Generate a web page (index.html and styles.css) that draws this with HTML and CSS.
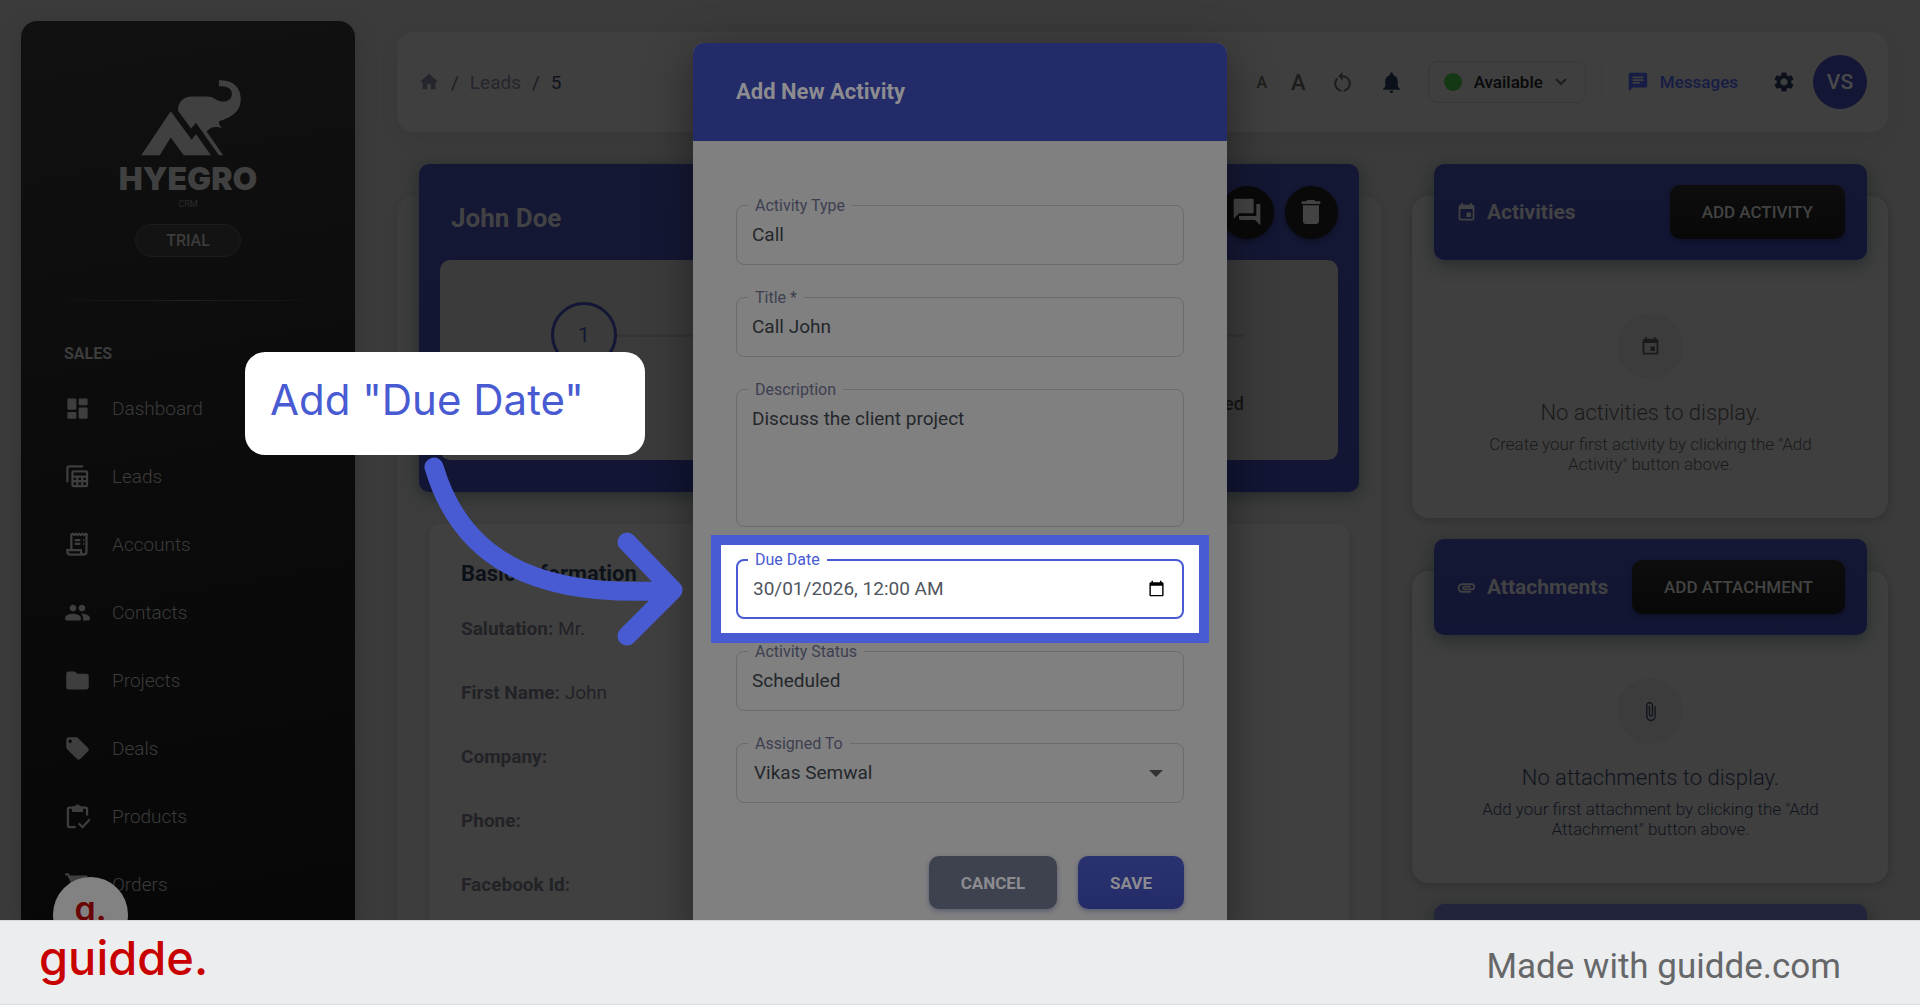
FILE: index.html
```html
<!DOCTYPE html>
<html lang="en">
  <head>
    <meta charset="UTF-8" />
    <meta name="viewport" content="width=device-width, initial-scale=1.0" />
    <title>Hyegro CRM - Add New Activity</title>
    <link rel="stylesheet" href="styles.css">
  </head>
  <body>
    <div class="stage">
      <aside class="sidebar">
        <div class="brand">
          <svg class="brand-logo" viewBox="420 235 306 232">
            <path d="M512 332L575 418L588 401L633 465H551L512 411L479 465H423Z" />
            <path d="M657 239C700 236 723 262 723 295C723 330 700 348 658 362C656 370 660 378 669 384C650 376 632 378 620 393L670 465H657L588 367L573 384L534 331C533 305 550 288 575 288H620C645 288 648 303 668 303C685 303 696 295 696 280C696 262 680 256 657 257Z" />
          </svg>
          <div class="brand-name">HYEGRO</div>
          <div class="brand-sub">CRM</div>
        </div>
        <span class="trial">TRIAL</span>
        <hr class="divider" />
        <h2 class="nav-title">SALES</h2>
        <nav class="nav">
          <a href="#">
            <svg viewBox="0 0 24 24"><path d="M4 13h6c.55 0 1-.45 1-1V4c0-.55-.45-1-1-1H4c-.55 0-1 .45-1 1v8c0 .55.45 1 1 1zm0 8h6c.55 0 1-.45 1-1v-4c0-.55-.45-1-1-1H4c-.55 0-1 .45-1 1v4c0 .55.45 1 1 1zm10 0h6c.55 0 1-.45 1-1v-8c0-.55-.45-1-1-1h-6c-.55 0-1 .45-1 1v8c0 .55.45 1 1 1zM13 4v4c0 .55.45 1 1 1h6c.55 0 1-.45 1-1V4c0-.55-.45-1-1-1h-6c-.55 0-1 .45-1 1z" /></svg>
            Dashboard
          </a>
          <a href="#">
            <svg class="line" viewBox="0 0 24 24"><path d="M3 17V4.500Q3 3 4.500 3H17M8.500 7.500h11q1 0 1 1v11q0 1-1 1h-11q-1 0-1-1v-11q0-1 1-1zM7.500 12h13M7.500 16.200h13M11.800 12v8.500M16.200 12v8.500" /></svg>
            Leads
          </a>
          <a href="#">
            <svg class="line" viewBox="0 0 24 24"><path d="M6.500 16V3M20 3v15.500q0 2.500-2.500 2.500H5.500q-2.500 0-2.500-2.500V17h12v1.500q0 2.500 2.500 2.500M9.500 8h5M9.500 11.500h5M17 8h1M17 11.500h1" /><path d="M6 3.500l1.500-1 1.500 1 1.500-1 1.500 1 1.500-1 1.500 1 1.500-1 1.500 1 1.500-1 1.500 1" /></svg>
            Accounts
          </a>
          <a href="#">
            <svg viewBox="0 0 24 24"><path d="M16 11c1.660 0 2.990-1.340 2.990-3S17.660 5 16 5c-1.660 0-3 1.340-3 3s1.340 3 3 3zm-8 0c1.660 0 2.990-1.340 2.990-3S9.660 5 8 5C6.340 5 5 6.340 5 8s1.340 3 3 3zm0 2c-2.330 0-7 1.170-7 3.500V18q0 1 1 1h12q1 0 1-1v-1.500c0-2.330-4.670-3.500-7-3.500zm8 0c-.29 0-.62.02-.97.05 1.160.84 1.970 1.970 1.970 3.450V19h5q1 0 1-1v-1.500c0-2.330-4.670-3.500-7-3.500z" /></svg>
            Contacts
          </a>
          <a href="#">
            <svg viewBox="0 0 24 24"><path d="M10.590 4.590C10.210 4.210 9.700 4 9.170 4H4c-1.100 0-1.990.9-1.990 2L2 18c0 1.100.9 2 2 2h16c1.100 0 2-.9 2-2V8c0-1.100-.9-2-2-2h-8l-1.410-1.410z" /></svg>
            Projects
          </a>
          <a href="#">
            <svg viewBox="0 0 24 24"><path d="M21.410 11.580l-9-9C12.050 2.220 11.550 2 11 2H4c-1.100 0-2 .9-2 2v7c0 .55.22 1.050.59 1.420l9 9c.36.36.86.58 1.410.58.55 0 1.050-.22 1.410-.59l7-7c.37-.36.59-.86.59-1.410 0-.55-.23-1.060-.59-1.420zM5.500 7C4.670 7 4 6.330 4 5.500S4.670 4 5.500 4 7 4.670 7 5.500 6.330 7 5.500 7z" /></svg>
            Deals
          </a>
          <a href="#">
            <svg class="line" viewBox="0 0 24 24"><path d="M10.500 21.500H5q-1.500 0-1.500-1.500V5.500Q3.500 4 5 4h14q1.500 0 1.500 1.500V11M13 18l3.500 3.500L23 14.500" /><path class="solid" d="M7 3h2.500a2.700 2.700 0 0 1 5 0H17v4q0 1-1 1H8q-1 0-1-1zM12 3a1 1 0 1 0 0 2 1 1 0 0 0 0-2z" /></svg>
            Products
          </a>
          <a href="#">
            <svg viewBox="0 0 24 24"><path d="M1 2v2h2l3.600 7.590-1.350 2.450c-.16.28-.25.61-.25.96 0 1.100.9 2 2 2h12v-2H7.420c-.14 0-.25-.11-.25-.25l.03-.12.9-1.630h7.450c.75 0 1.410-.41 1.750-1.030l3.580-6.490c.08-.14.12-.31.12-.48 0-.55-.45-1-1-1H5.210l-.94-2H1z" /></svg>
            Orders
          </a>
        </nav>
      </aside>

      <main class="main">
        <header class="topbar">
          <nav class="crumbs">
            <a href="#" aria-label="Home"><svg viewBox="0 0 24 24"><path d="M10 20v-6h4v6h5v-8h3L12 3 2 12h3v8z" /></svg></a>
            <span>/</span>
            <a href="#">Leads</a>
            <span>/</span>
            <b>5</b>
          </nav>
          <div class="tools">
            <button class="font-small" type="button">A</button>
            <button class="font-large" type="button">A</button>
            <button type="button" aria-label="Reset"><svg viewBox="0 0 24 24"><path d="M12 5V2L8 6l4 4V7c3.310 0 6 2.690 6 6 0 2.970-2.170 5.430-5 5.910v2.020c3.950-.49 7-3.850 7-7.930 0-4.420-3.580-8-8-8zm-6 8c0-1.650.67-3.150 1.760-4.240L6.340 7.340C4.900 8.790 4 10.790 4 13c0 4.080 3.050 7.440 7 7.930v-2.020c-2.830-.48-5-2.940-5-5.910z" /></svg></button>
            <button class="navy" type="button" aria-label="Notifications"><svg viewBox="0 0 24 24"><path d="M12 22c1.100 0 2-.9 2-2h-4c0 1.100.89 2 2 2zm6-6v-5c0-3.070-1.640-5.640-4.500-6.320V4c0-.83-.67-1.500-1.500-1.500s-1.500.67-1.500 1.500v.68C7.630 5.360 6 7.920 6 11v5l-2 2v1h16v-1l-2-2z" /></svg></button>
            <button class="status" type="button">
              <span class="dot"></span>
              Available
              <svg viewBox="0 0 12 8"><path d="M1 1l5 5 5-5" /></svg>
            </button>
          </div>
          <div class="user">
            <a class="messages" href="#">
              <svg viewBox="0 0 24 24"><path d="M20 2H4c-1.100 0-1.990.9-1.990 2L2 22l4-4h14c1.100 0 2-.9 2-2V4c0-1.100-.9-2-2-2zM6 9h12v2H6V9zm8 5H6v-2h8v2zm4-6H6V6h12v2z" /></svg>
              Messages
            </a>
            <button class="gear" type="button" aria-label="Settings"><svg viewBox="0 0 24 24"><path d="M19.140 12.940c.04-.3.06-.61.06-.94 0-.32-.02-.64-.07-.94l2.030-1.580c.18-.14.23-.41.12-.61l-1.920-3.320c-.12-.22-.37-.29-.59-.22l-2.390.96c-.5-.38-1.030-.7-1.620-.94l-.36-2.540c-.04-.24-.24-.41-.48-.41h-3.840c-.24 0-.43.17-.47.41l-.36 2.540c-.59.24-1.130.57-1.620.94l-2.390-.96c-.22-.08-.47 0-.59.22L2.740 8.870c-.12.21-.08.47.12.61l2.030 1.580c-.05.3-.09.63-.09.94s.02.64.07.94l-2.030 1.580c-.18.14-.23.41-.12.61l1.920 3.320c.12.22.37.29.59.22l2.390-.96c.5.38 1.030.7 1.620.94l.36 2.540c.05.24.24.41.48.41h3.840c.24 0 .44-.17.47-.41l.36-2.540c.59-.24 1.130-.56 1.620-.94l2.390.96c.22.08.47 0 .59-.22l1.920-3.320c.12-.22.07-.47-.12-.61l-2.010-1.580zM12 15.600c-1.980 0-3.600-1.620-3.600-3.600s1.620-3.600 3.600-3.600 3.600 1.620 3.600 3.600-1.620 3.600-3.600 3.600z" /></svg></button>
            <button class="avatar" type="button">VS</button>
          </div>
        </header>

        <div class="columns">
          <section class="lead">
            <div class="lead-head">
              <div class="lead-title">
                <h1>John Doe</h1>
                <button class="round" type="button" aria-label="Chat"><svg viewBox="0 0 24 24"><path d="M21 6h-2v9H6v2c0 .55.45 1 1 1h11l4 4V7c0-.55-.45-1-1-1zm-4 6V3c0-.55-.45-1-1-1H3c-.55 0-1 .45-1 1v14l4-4h10c.55 0 1-.45 1-1z" /></svg></button>
                <button class="round" type="button" aria-label="Delete"><svg viewBox="0 0 24 24"><path d="M6 19c0 1.100.9 2 2 2h8c1.100 0 2-.9 2-2V7H6v12zM19 4h-3.500l-1-1h-5l-1 1H5v2h14V4z" /></svg></button>
              </div>
              <div class="steps">
                <div class="step-row">
                  <span class="step">1</span>
                  <span class="step-line"></span>
                </div>
                <p class="step-label">Qualified</p>
              </div>
            </div>
            <div class="info">
              <h2>Basic Information</h2>
              <p><b>Salutation:</b> Mr.</p>
              <p><b>First Name:</b> John</p>
              <p><b>Company:</b></p>
              <p><b>Phone:</b></p>
              <p><b>Facebook Id:</b></p>
            </div>
          </section>

          <div class="side">
            <section class="panel roomy">
              <header class="panel-head">
                <svg viewBox="0 0 24 24"><path d="M17 12h-5v5h5v-5zM16 1v2H8V1H6v2H5c-1.110 0-1.990.9-1.990 2L3 19c0 1.100.89 2 2 2h14c1.100 0 2-.9 2-2V5c0-1.100-.9-2-2-2h-1V1h-2zm3 18H5V8h14v11z" /></svg>
                <h2>Activities</h2>
                <button class="dark-btn" type="button">ADD ACTIVITY</button>
              </header>
              <div class="empty">
                <span class="empty-icon"><svg viewBox="0 0 24 24"><path d="M17 12h-5v5h5v-5zM16 1v2H8V1H6v2H5c-1.110 0-1.990.9-1.990 2L3 19c0 1.100.89 2 2 2h14c1.100 0 2-.9 2-2V5c0-1.100-.9-2-2-2h-1V1h-2zm3 18H5V8h14v11z" /></svg></span>
                <h3>No activities to display.</h3>
                <p>Create your first activity by clicking the "Add<br />Activity" button above.</p>
              </div>
            </section>
            <section class="panel">
              <header class="panel-head">
                <svg viewBox="0 0 24 24"><path d="M2 12.500C2 9.460 4.460 7 7.500 7H18c2.210 0 4 1.790 4 4s-1.790 4-4 4H9.500C8.120 15 7 13.880 7 12.500S8.120 10 9.500 10H17v2H9.410c-.55 0-.55 1 0 1H18c1.100 0 2-.9 2-2s-.9-2-2-2H7.500C5.570 9 4 10.570 4 12.500S5.570 16 7.500 16H17v2H7.500C4.460 18 2 15.540 2 12.500z" /></svg>
                <h2>Attachments</h2>
                <button class="dark-btn" type="button">ADD ATTACHMENT</button>
              </header>
              <div class="empty navy">
                <span class="empty-icon"><svg viewBox="0 0 24 24"><path d="M16.500 6v11.500c0 2.210-1.790 4-4 4s-4-1.790-4-4V5c0-1.380 1.120-2.500 2.500-2.500s2.500 1.120 2.500 2.500v10.500c0 .55-.45 1-1 1s-1-.45-1-1V6H10v9.500c0 1.380 1.120 2.500 2.500 2.500s2.500-1.120 2.500-2.500V5c0-2.210-1.790-4-4-4S7 2.790 7 5v12.500c0 3.040 2.460 5.500 5.500 5.500s5.500-2.460 5.500-5.500V6h-1.500z" /></svg></span>
                <h3>No attachments to display.</h3>
                <p>Add your first attachment by clicking the "Add<br />Attachment" button above.</p>
              </div>
            </section>
            <section class="panel">
              <header class="panel-head muted"></header>
            </section>
          </div>
        </div>
      </main>

      <div class="launcher">g.</div>

      <div class="overlay">
        <form class="modal">
          <h2 class="modal-title">Add New Activity</h2>
          <div class="modal-body">
            <div class="field">
              <label for="type">Activity Type</label>
              <input id="type" type="text" value="Call" />
            </div>
            <div class="field">
              <label for="title">Title *</label>
              <input id="title" type="text" value="Call John" />
            </div>
            <div class="field">
              <label for="description">Description</label>
              <textarea id="description">Discuss the client project</textarea>
            </div>
            <div class="field spotlight">
              <input id="due" type="text" value="30/01/2026, 12:00 AM" />
              <label for="due">Due Date</label>
              <button class="picker" type="button" aria-label="Pick a date"><svg viewBox="0 0 24 24"><path d="M20 3h-1V1h-2v2H7V1H5v2H4c-1.100 0-2 .9-2 2v16c0 1.100.9 2 2 2h16c1.100 0 2-.9 2-2V5c0-1.100-.9-2-2-2zm0 18H4V8h16v13z" /></svg></button>
            </div>
            <div class="field">
              <label for="activity-status">Activity Status</label>
              <input id="activity-status" type="text" value="Scheduled" />
            </div>
            <div class="field">
              <label for="assigned">Assigned To</label>
              <select id="assigned">
                <option>Vikas Semwal</option>
              </select>
              <span class="caret"></span>
            </div>
          </div>
          <div class="modal-actions">
            <button class="cancel" type="button">CANCEL</button>
            <button class="save" type="submit">SAVE</button>
          </div>
        </form>
      </div>

      <div class="callout">Add "Due Date"</div>
      <svg class="arrow" viewBox="0 0 260 190"><path d="M14 17C40 105 110 150 253 140M207 92L253 140L207 186" /></svg>
    </div>

    <footer class="footer">
      <span class="guidde">guidde.</span>
      <span>Made with guidde.com</span>
    </footer>
  </body>
</html>
```
FILE: styles.css
```css
* {
  box-sizing: border-box;
}

body {
  display: flex;
  flex-direction: column;
  height: 100vh;
  margin: 0;
  overflow: hidden;
  font-family: Roboto, Arial, sans-serif;
  background: #3a3b3a;
}

h1,
h2,
h3,
p {
  margin: 0;
}

a {
  color: inherit;
  text-decoration: none;
}

button {
  padding: 0;
  border: 0;
  font: inherit;
  color: inherit;
  background: none;
  cursor: pointer;
}

svg {
  display: block;
  flex: none;
  fill: currentColor;
}

.stage {
  position: relative;
  display: flex;
  flex: 1;
  min-height: 0;
  overflow: hidden;
}

/* sidebar */
.sidebar {
  flex: none;
  width: 334px;
  margin: 21px 0 0 21px;
  padding-top: 58px;
  border-radius: 16px 16px 0 0;
  color: #3c3c3c;
  background: linear-gradient(170deg, #111112, #0b0b0b 50%, #070707);
  box-shadow: 0 8px 24px rgba(0, 0, 0, 0.15);
}

.brand {
  display: flex;
  flex-direction: column;
  align-items: center;
  color: #404040;
}

.brand-logo {
  width: 102px;
  height: 77px;
  margin-left: 5px;
}

.brand-name {
  margin-top: 3px;
  font-family: Inter, sans-serif;
  font-size: 32px;
  font-weight: 900;
  line-height: 39px;
}

.brand-sub {
  font-size: 9px;
  line-height: 12px;
  color: #2c2c2c;
}

.trial {
  display: block;
  width: 106px;
  margin: 14px auto 0;
  border: 1px solid #1d1d1d;
  border-radius: 17px;
  font-size: 16px;
  font-weight: 500;
  line-height: 31px;
  text-align: center;
  background: #131313;
}

.divider {
  height: 1px;
  margin: 43px 22px 0;
  border: 0;
  background: linear-gradient(90deg, transparent, #202020, transparent);
}

.nav-title {
  margin: 43px 43px 10px;
  font-size: 16px;
  line-height: 20px;
}

.nav a {
  display: flex;
  align-items: center;
  gap: 21px;
  height: 68px;
  padding-left: 43px;
  font-size: 19px;
  font-weight: 300;
}

.nav svg {
  width: 27px;
  height: 27px;
  fill: #3e3e3e;
}

.nav svg.line {
  fill: none;
  stroke: #3e3e3e;
  stroke-width: 2;
}

.nav svg .solid {
  fill: #3e3e3e;
  fill-rule: evenodd;
  stroke: none;
}

/* top bar */
.main {
  flex: 1;
  min-width: 0;
  padding: 32px 32px 0 42px;
}

.topbar {
  display: flex;
  align-items: center;
  height: 100px;
  padding: 0 21px;
  border-radius: 16px;
  background: #3f3f3f;
  box-shadow: 0 6px 20px rgba(0, 0, 0, 0.05);
}

.crumbs {
  display: flex;
  flex: 1;
  align-items: center;
  gap: 11px;
  font-size: 19px;
  color: #25262d;
}

.crumbs span {
  color: #1c1c1f;
}

.crumbs b {
  font-weight: 400;
  color: #10141d;
}

.crumbs svg {
  width: 22px;
  height: 22px;
}

.tools {
  display: flex;
  align-items: center;
  gap: 24px;
  color: #1d1d1d;
}

.tools svg {
  width: 25px;
  height: 25px;
}

.font-small {
  font-size: 16px;
  font-weight: 500;
}

.font-large {
  font-size: 22px;
  font-weight: 500;
}

.tools .navy {
  color: #0b101a;
}

.tools .status {
  display: flex;
  align-items: center;
  gap: 12px;
  height: 42px;
  padding: 0 18px 0 15px;
  border: 1px solid #383838;
  border-radius: 10px;
  font-size: 17px;
  font-weight: 500;
  color: #090909;
}

.status .dot {
  width: 18px;
  height: 18px;
  border-radius: 50%;
  background: #143814;
}

.tools .status svg {
  width: 12px;
  height: 8px;
  fill: none;
  stroke: #1d1d1d;
  stroke-width: 2;
}

.user {
  display: flex;
  align-items: center;
  height: 32px;
  margin-left: 15px;
  padding-left: 25px;
  border-left: 1px solid #3b3b3b;
}

.messages {
  display: flex;
  align-items: center;
  gap: 11px;
  font-size: 17px;
  font-weight: 500;
  color: #171c45;
}

.messages svg {
  width: 22px;
  height: 22px;
}

.gear {
  margin: 0 17px 0 34px;
  color: #0b101a;
}

.gear svg {
  width: 24px;
  height: 24px;
}

.avatar {
  width: 54px;
  height: 54px;
  border-radius: 50%;
  font-size: 21px;
  font-weight: 500;
  color: #4a4a4c;
  background: #131735;
}

/* lead details */
.columns {
  display: grid;
  grid-template-columns: 31fr 15fr;
  gap: 31px;
  padding-top: 32px;
}

.lead {
  height: 100vh;
  margin-top: 32px;
  padding: 0 22px;
  border-radius: 16px;
  background: #3d3d3d;
  box-shadow: 0 4px 10px rgba(0, 0, 0, 0.1);
}

.lead-head {
  margin-top: -32px;
  padding: 0 21px 32px;
  border-radius: 10px;
  background: linear-gradient(180deg, #151834, #121533);
  box-shadow: 0 4px 16px rgba(14, 28, 28, 0.5);
}

.lead-title {
  display: flex;
  align-items: center;
  gap: 11px;
  height: 96px;
}

.lead-title h1 {
  flex: 1;
  padding: 11px 0 0 11px;
  font-size: 26px;
  color: #424244;
}

.round {
  display: grid;
  place-items: center;
  width: 53px;
  height: 53px;
  border-radius: 50%;
  color: #434343;
  background: #090909;
  box-shadow: 0 2px 5px rgba(0, 0, 0, 0.4);
}

.round svg {
  width: 32px;
  height: 32px;
}

.steps {
  height: 200px;
  padding: 42px 94px 0 111px;
  border-radius: 10px;
  background: #3b3b3b;
}

.step-row {
  display: flex;
  align-items: center;
}

.step {
  width: 66px;
  height: 66px;
  border: 3px solid #131735;
  border-radius: 50%;
  font-size: 21px;
  line-height: 60px;
  text-align: center;
  color: #131735;
}

.step-line {
  flex: 1;
  height: 3px;
  background: #353535;
}

.step-label {
  margin-top: 26px;
  font-size: 18px;
  font-weight: 500;
  line-height: 20px;
  text-align: right;
  color: #151515;
}

.info {
  height: 100%;
  margin: 32px 10px 0;
  padding: 38px 32px;
  border-radius: 10px;
  background: #404040;
  box-shadow: 0 2px 8px rgba(0, 0, 0, 0.1);
}

.info h2 {
  margin-bottom: 31px;
  font-size: 22px;
  line-height: 24px;
  color: #0d121a;
}

.info p {
  margin-bottom: 40px;
  font-size: 19px;
  line-height: 24px;
  color: #222227;
}

/* right column */
.side {
  display: flex;
  flex-direction: column;
  gap: 53px;
}

.panel {
  margin-top: 32px;
  padding: 0 21px 44px 22px;
  border-radius: 16px;
  background: #3f3f3f;
  box-shadow: 0 2px 8px rgba(0, 0, 0, 0.2);
}

.panel + .panel {
  margin-top: 0;
}

.panel-head {
  display: flex;
  align-items: center;
  height: 96px;
  margin-top: -32px;
  padding: 0 22px;
  border-radius: 10px;
  color: #424244;
  background: linear-gradient(180deg, #151834, #121533);
  box-shadow: 0 5px 16px rgba(14, 28, 28, 0.5);
}

.panel-head.muted {
  background: #22243b;
}

.panel-head svg {
  width: 21px;
  height: 21px;
}

.panel-head h2 {
  flex: 1;
  padding-left: 10px;
  font-size: 21px;
}

.dark-btn {
  height: 54px;
  padding: 0 32px;
  border-radius: 10px;
  font-size: 17px;
  font-weight: 500;
  color: #434343;
  background: linear-gradient(180deg, #0d0d0d, #080808);
  box-shadow: 0 2px 5px rgba(0, 0, 0, 0.3);
}

.empty {
  padding-top: 43px;
  text-align: center;
  color: #1a1a1a;
}

.roomy .empty {
  padding-top: 53px;
}

.empty.navy {
  color: #10141d;
}

.empty-icon {
  display: grid;
  place-items: center;
  width: 66px;
  height: 66px;
  margin: 0 auto;
  border-radius: 50%;
  background: #3c3c3c;
}

.empty-icon svg {
  width: 21px;
  height: 21px;
}

.empty h3 {
  margin: 21px 0 8px;
  font-size: 22px;
  font-weight: 300;
  line-height: 26px;
}

.empty p {
  font-size: 17px;
  font-weight: 300;
  line-height: 20px;
}

/* modal */
.overlay {
  position: absolute;
  inset: 0;
  display: flex;
  justify-content: center;
  align-items: flex-start;
  padding-top: 43px;
}

.modal {
  width: 534px;
  padding-bottom: 32px;
  border-radius: 11px;
  background: #808080;
  box-shadow: 0 12px 48px rgba(0, 0, 0, 0.4);
}

.modal-title {
  padding: 0 43px;
  border-radius: 11px 11px 0 0;
  font-size: 22px;
  line-height: 98px;
  color: #8c8c90;
  background: #232b69;
}

.modal-body {
  display: flex;
  flex-direction: column;
  gap: 32px;
  padding: 64px 43px 53px;
}

.field {
  position: relative;
}

.field label {
  position: absolute;
  top: -9px;
  left: 12px;
  padding: 0 7px;
  font-size: 16px;
  line-height: 20px;
  color: #3d3f50;
  background: #808080;
}

.field input,
.field textarea,
.field select {
  display: block;
  width: 100%;
  height: 60px;
  padding: 0 15px 2px;
  border: 1px solid #6a6b6b;
  border-radius: 8px;
  outline: 0;
  font: 19px Roboto, Arial, sans-serif;
  color: #24272b;
  background: transparent;
  appearance: none;
}

.field select {
  padding: 0 17px 2px;
}

.field textarea {
  height: 138px;
  padding: 17px 15px;
  resize: none;
}

.caret {
  position: absolute;
  top: 27px;
  right: 21px;
  border: 7px solid transparent;
  border-top-color: #333;
  border-bottom: 0;
  pointer-events: none;
}

.spotlight {
  z-index: 1;
}

.spotlight::before {
  content: "";
  position: absolute;
  inset: -24px -25px;
  border: 10px solid #485bd2;
  background: #fff;
}

.spotlight label {
  color: #485bd2;
  background: #fff;
}

.spotlight input {
  position: relative;
  border: 2px solid #485bd2;
  color: #50565e;
}

.picker {
  position: absolute;
  top: 21px;
  right: 19px;
  color: #000;
}

.picker svg {
  width: 17px;
  height: 17px;
}

.modal-actions {
  display: flex;
  justify-content: flex-end;
  gap: 21px;
  padding: 0 43px;
}

.modal-actions button {
  height: 53px;
  padding: 0 32px;
  border-radius: 10px;
  font-size: 17px;
  font-weight: 700;
  color: #8c8c90;
  box-shadow: 0 2px 5px rgba(30, 35, 80, 0.4);
}

.modal-actions .cancel {
  background: #3e424e;
}

.modal-actions .save {
  background: linear-gradient(180deg, #2a326f, #232b69);
}

/* guide annotations */
.launcher {
  position: absolute;
  bottom: -32px;
  left: 53px;
  width: 75px;
  height: 75px;
  border-radius: 50%;
  font: 600 34px/63px Inter, sans-serif;
  text-align: center;
  color: #690505;
  background: #828282;
}

.callout {
  position: absolute;
  top: 352px;
  left: 245px;
  width: 400px;
  height: 103px;
  padding-left: 25px;
  border-radius: 20px;
  font: 400 42px/96px Inter, sans-serif;
  color: #485bd2;
  background: #fff;
}

.arrow {
  position: absolute;
  top: 450px;
  left: 420px;
  width: 260px;
  height: 190px;
  overflow: visible;
  fill: none;
  stroke: #485bd2;
  stroke-width: 19;
  stroke-linecap: round;
  stroke-linejoin: round;
}

.footer {
  display: flex;
  flex: none;
  justify-content: space-between;
  align-items: center;
  height: 85px;
  padding: 0 79px 0 39px;
  border-top: 1px solid #dadada;
  border-bottom: 1px solid #dcdfe3;
  font-size: 35px;
  color: #666769;
  background: #ecedef;
}

.footer span {
  padding-top: 8px;
}

.footer .guidde {
  padding: 0 0 10px;
  font-family: Inter, sans-serif;
  font-size: 47px;
  font-weight: 500;
  color: #c80000;
}
```
